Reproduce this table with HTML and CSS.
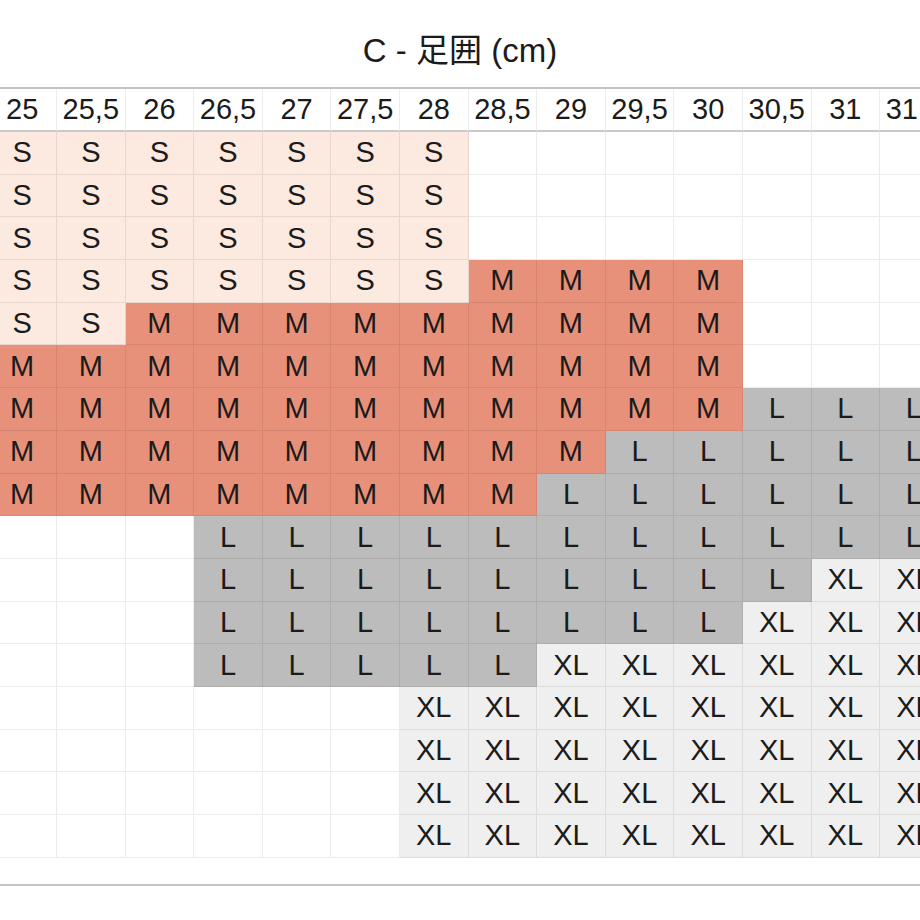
FILE: index.html
```html
<!DOCTYPE html>
<html lang="ja">
<head>
<meta charset="utf-8">
<title>C - 足囲 (cm)</title>
<link rel="stylesheet" href="styles.css">
</head>
<body>
<h1 class="title">C - 足囲 (cm)</h1>
<div class="chart">
  <div class="grid">
    <div class="hd">25</div><div class="hd">25,5</div><div class="hd">26</div><div class="hd">26,5</div><div class="hd">27</div><div class="hd">27,5</div><div class="hd">28</div><div class="hd">28,5</div><div class="hd">29</div><div class="hd">29,5</div><div class="hd">30</div><div class="hd">30,5</div><div class="hd">31</div><div class="hd">31,5</div>

    <div class="s">S</div><div class="s">S</div><div class="s">S</div><div class="s">S</div><div class="s">S</div><div class="s">S</div><div class="s">S</div><div class="e"></div><div class="e"></div><div class="e"></div><div class="e"></div><div class="e"></div><div class="e"></div><div class="e"></div>
    <div class="s">S</div><div class="s">S</div><div class="s">S</div><div class="s">S</div><div class="s">S</div><div class="s">S</div><div class="s">S</div><div class="e"></div><div class="e"></div><div class="e"></div><div class="e"></div><div class="e"></div><div class="e"></div><div class="e"></div>
    <div class="s">S</div><div class="s">S</div><div class="s">S</div><div class="s">S</div><div class="s">S</div><div class="s">S</div><div class="s">S</div><div class="e"></div><div class="e"></div><div class="e"></div><div class="e"></div><div class="e"></div><div class="e"></div><div class="e"></div>
    <div class="s">S</div><div class="s">S</div><div class="s">S</div><div class="s">S</div><div class="s">S</div><div class="s">S</div><div class="s">S</div><div class="m">M</div><div class="m">M</div><div class="m">M</div><div class="m">M</div><div class="e"></div><div class="e"></div><div class="e"></div>
    <div class="s">S</div><div class="s">S</div><div class="m">M</div><div class="m">M</div><div class="m">M</div><div class="m">M</div><div class="m">M</div><div class="m">M</div><div class="m">M</div><div class="m">M</div><div class="m">M</div><div class="e"></div><div class="e"></div><div class="e"></div>
    <div class="m">M</div><div class="m">M</div><div class="m">M</div><div class="m">M</div><div class="m">M</div><div class="m">M</div><div class="m">M</div><div class="m">M</div><div class="m">M</div><div class="m">M</div><div class="m">M</div><div class="e"></div><div class="e"></div><div class="e"></div>
    <div class="m">M</div><div class="m">M</div><div class="m">M</div><div class="m">M</div><div class="m">M</div><div class="m">M</div><div class="m">M</div><div class="m">M</div><div class="m">M</div><div class="m">M</div><div class="m">M</div><div class="l">L</div><div class="l">L</div><div class="l">L</div>
    <div class="m">M</div><div class="m">M</div><div class="m">M</div><div class="m">M</div><div class="m">M</div><div class="m">M</div><div class="m">M</div><div class="m">M</div><div class="m">M</div><div class="l">L</div><div class="l">L</div><div class="l">L</div><div class="l">L</div><div class="l">L</div>
    <div class="m">M</div><div class="m">M</div><div class="m">M</div><div class="m">M</div><div class="m">M</div><div class="m">M</div><div class="m">M</div><div class="m">M</div><div class="l">L</div><div class="l">L</div><div class="l">L</div><div class="l">L</div><div class="l">L</div><div class="l">L</div>
    <div class="e"></div><div class="e"></div><div class="e"></div><div class="l">L</div><div class="l">L</div><div class="l">L</div><div class="l">L</div><div class="l">L</div><div class="l">L</div><div class="l">L</div><div class="l">L</div><div class="l">L</div><div class="l">L</div><div class="l">L</div>
    <div class="e"></div><div class="e"></div><div class="e"></div><div class="l">L</div><div class="l">L</div><div class="l">L</div><div class="l">L</div><div class="l">L</div><div class="l">L</div><div class="l">L</div><div class="l">L</div><div class="l">L</div><div class="xl">XL</div><div class="xl">XL</div>
    <div class="e"></div><div class="e"></div><div class="e"></div><div class="l">L</div><div class="l">L</div><div class="l">L</div><div class="l">L</div><div class="l">L</div><div class="l">L</div><div class="l">L</div><div class="l">L</div><div class="xl">XL</div><div class="xl">XL</div><div class="xl">XL</div>
    <div class="e"></div><div class="e"></div><div class="e"></div><div class="l">L</div><div class="l">L</div><div class="l">L</div><div class="l">L</div><div class="l">L</div><div class="xl">XL</div><div class="xl">XL</div><div class="xl">XL</div><div class="xl">XL</div><div class="xl">XL</div><div class="xl">XL</div>
    <div class="e"></div><div class="e"></div><div class="e"></div><div class="e"></div><div class="e"></div><div class="e"></div><div class="xl">XL</div><div class="xl">XL</div><div class="xl">XL</div><div class="xl">XL</div><div class="xl">XL</div><div class="xl">XL</div><div class="xl">XL</div><div class="xl">XL</div>
    <div class="e"></div><div class="e"></div><div class="e"></div><div class="e"></div><div class="e"></div><div class="e"></div><div class="xl">XL</div><div class="xl">XL</div><div class="xl">XL</div><div class="xl">XL</div><div class="xl">XL</div><div class="xl">XL</div><div class="xl">XL</div><div class="xl">XL</div>
    <div class="e"></div><div class="e"></div><div class="e"></div><div class="e"></div><div class="e"></div><div class="e"></div><div class="xl">XL</div><div class="xl">XL</div><div class="xl">XL</div><div class="xl">XL</div><div class="xl">XL</div><div class="xl">XL</div><div class="xl">XL</div><div class="xl">XL</div>
    <div class="e"></div><div class="e"></div><div class="e"></div><div class="e"></div><div class="e"></div><div class="e"></div><div class="xl">XL</div><div class="xl">XL</div><div class="xl">XL</div><div class="xl">XL</div><div class="xl">XL</div><div class="xl">XL</div><div class="xl">XL</div><div class="xl">XL</div>
  </div>
</div>
</body>
</html>
```

FILE: styles.css
```css
html, body {
  margin: 0;
  padding: 0;
  background: #ffffff;
}

body {
  width: 920px;
  height: 920px;
  overflow: hidden;
  font-family: "Liberation Sans", "Noto Sans CJK JP", sans-serif;
  color: #1b1b1b;
}

.title {
  margin: 0;
  height: 87px;
  box-sizing: border-box;
  padding-top: 32px;
  font-size: 33px;
  line-height: 38px;
  font-weight: normal;
  text-align: center;
}

.chart {
  border-top: 2px solid #c4c4c4;
  border-bottom: 2px solid #c4c4c4;
  padding-bottom: 26px;
  overflow: hidden;
}

.grid {
  display: grid;
  grid-template-columns: repeat(14, 68.6px);
  grid-template-rows: 43px;
  grid-auto-rows: 42.7px;
  margin-left: -11.6px;
  width: 960.4px;
}

.grid > div {
  box-sizing: border-box;
  display: flex;
  align-items: center;
  justify-content: center;
  font-size: 29px;
  border-right: 1px solid rgba(0, 0, 0, 0.08);
  border-bottom: 1px solid rgba(0, 0, 0, 0.08);
  white-space: nowrap;
}

.grid > .hd {
  background: #ffffff;
  border-right-color: #ececec;
  border-bottom: 2px solid #c9c9c9;
}

.e { background: #ffffff; }
.s { background: #fce9e0; }
.m { background: #e8917a; }
.l { background: #bcbcbc; }
.xl { background: #efefef; }
```
